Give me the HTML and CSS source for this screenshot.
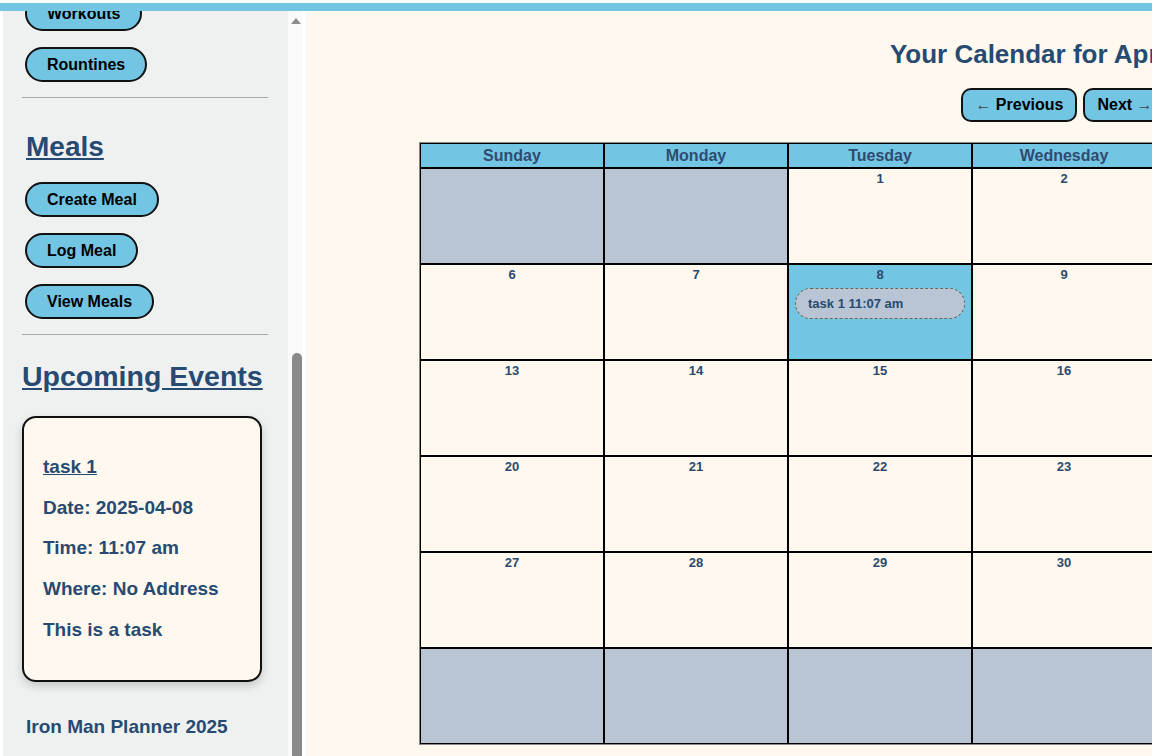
FILE: index.html
```html
<!DOCTYPE html>
<html lang="en">
<head>
    <meta charset="UTF-8">
    <meta name="viewport" content="width=device-width, initial-scale=1.0">
    <title>Iron Man Planner</title>
    <link rel="stylesheet" href="styles.css">
</head>
<body>
    <div class="topbar"></div>
    <div class="layout">
        <aside class="sidebar">
            <div class="side-scroll" id="side-scroll">
                <h2 class="side-title">Calendar</h2>
                <div class="side-links">
                    <button class="pill">Add Event</button>
                    <button class="pill">View Events</button>
                    <button class="pill">Settings</button>
                </div>
                <hr class="divider">
                <h2 class="side-title">Fitness</h2>
                <div class="side-links">
                    <button class="pill">Log Workout</button>
                    <button class="pill">Workouts</button>
                    <button class="pill">Rountines</button>
                </div>
                <hr class="divider">
                <h2 class="side-title">Meals</h2>
                <div class="side-links">
                    <button class="pill">Create Meal</button>
                    <button class="pill">Log Meal</button>
                    <button class="pill">View Meals</button>
                </div>
                <hr class="divider">
                <h2 class="events-title">Upcoming Events</h2>
                <div class="event-card">
                    <p><a href="javascript:void(0)">task 1</a></p>
                    <p>Date: 2025-04-08</p>
                    <p>Time: 11:07 am</p>
                    <p>Where: No Address</p>
                    <p>This is a task</p>
                </div>
                <p class="side-footer">Iron Man Planner 2025</p>
            </div>
            <div class="scrollbar">
                <span class="scroll-up"></span>
                <span class="scroll-thumb"></span>
            </div>
        </aside>
        <main class="main">
            <div class="main-inner">
                <h2 class="cal-title">Your Calendar for April 2025</h2>
                <div class="cal-nav">
                    <button class="nav-btn"><span class="arrow">&larr;</span> Previous</button>
                    <button class="nav-btn">Next <span class="arrow">&rarr;</span></button>
                </div>
                <table class="calendar">
                    <tr>
                        <th>Sunday</th><th>Monday</th><th>Tuesday</th><th>Wednesday</th><th>Thursday</th><th>Friday</th><th>Saturday</th>
                    </tr>
                    <tr>
                        <td class="empty"></td><td class="empty"></td><td>1</td><td>2</td><td>3</td><td>4</td><td>5</td>
                    </tr>
                    <tr>
                        <td>6</td><td>7</td>
                        <td class="today">8<span class="event">task 1 11:07 am</span></td>
                        <td>9</td><td>10</td><td>11</td><td>12</td>
                    </tr>
                    <tr>
                        <td>13</td><td>14</td><td>15</td><td>16</td><td>17</td><td>18</td><td>19</td>
                    </tr>
                    <tr>
                        <td>20</td><td>21</td><td>22</td><td>23</td><td>24</td><td>25</td><td>26</td>
                    </tr>
                    <tr>
                        <td>27</td><td>28</td><td>29</td><td>30</td><td class="empty"></td><td class="empty"></td><td class="empty"></td>
                    </tr>
                    <tr>
                        <td class="empty"></td><td class="empty"></td><td class="empty"></td><td class="empty"></td><td class="empty"></td><td class="empty"></td><td class="empty"></td>
                    </tr>
                </table>
            </div>
        </main>
    </div>
    <script>
        const sideScroll = document.getElementById('side-scroll');
        sideScroll.scrollTop = sideScroll.scrollHeight;
    </script>
</body>
</html>
```

FILE: styles.css
```css
html, body {
    margin: 0;
    height: 100%;
    overflow: hidden;
}
body {
    font-family: 'Liberation Sans', Arial, sans-serif;
    background: #fff;
    padding-top: 3px;
    box-sizing: border-box;
}
.topbar {
    height: 8px;
    background-color: #72c6e4;
}
.layout {
    display: flex;
    gap: 3px;
    padding-left: 3px;
    height: 100vh;
}
.sidebar {
    flex: 0 0 300px;
    display: flex;
    height: 100vh;
}
.side-scroll {
    flex: 1;
    overflow: hidden;
    background-color: #eff1f1;
    padding: 0 20px 29px 19px;
    box-sizing: border-box;
}
.scrollbar {
    flex: 0 0 15px;
    display: flex;
    flex-direction: column;
    align-items: center;
    background-color: #fafafa;
}
.scroll-up {
    margin-top: 7px;
    border-left: 5px solid transparent;
    border-right: 5px solid transparent;
    border-bottom: 6px solid #8c8c8c;
}
.scroll-thumb {
    flex: 1;
    width: 10px;
    margin-top: 329px;
    margin-left: 2px;
    background-color: #8a8a8a;
    border-radius: 5px 5px 0 0;
}
.side-title {
    font-size: 28px;
    color: #274a72;
    text-decoration: underline;
    margin: 33px 0 19px 4px;
}
.events-title {
    font-size: 28.5px;
    color: #274a72;
    text-decoration: underline;
    margin: 25px 0 23px 0;
}
.side-links {
    display: flex;
    flex-direction: column;
    align-items: flex-start;
    gap: 16px;
    margin-bottom: 15px;
}
.pill {
    margin-left: 3px;
    padding: 6px 20px;
    border: 2px solid #111;
    border-radius: 20px;
    background-color: #72c6e4;
    color: #000;
    font-family: inherit;
    font-size: 16px;
    font-weight: bold;
    line-height: 19px;
    cursor: pointer;
}
.divider {
    border: none;
    border-top: 1px solid #aaa;
    margin: 0;
}
.event-card {
    width: 240px;
    box-sizing: border-box;
    padding: 29px 19px 29px;
    border: 2px solid #111;
    border-radius: 14px;
    background-color: #fff8ef;
    box-shadow: 0 4px 10px rgba(0, 0, 0, 0.18);
}
.event-card p {
    margin: 0;
    line-height: 40.7px;
    font-size: 19px;
    font-weight: bold;
    color: #274a72;
}
.event-card a {
    color: #274a72;
    text-decoration: underline;
}
.side-footer {
    margin: 34px 0 0 4px;
    font-size: 19px;
    font-weight: bold;
    color: #274a72;
}
.main {
    flex: 1;
    overflow: hidden;
    background-color: #fff8ef;
}
.main-inner {
    width: 1516px;
    text-align: center;
}
.cal-title {
    font-size: 26px;
    line-height: 30px;
    color: #274a72;
    margin: 28px 0 19px;
}
.cal-nav {
    display: flex;
    justify-content: center;
    gap: 6px;
}
.nav-btn {
    padding: 6px 12px;
    border: 2px solid #111;
    border-radius: 10px;
    background-color: #72c6e4;
    color: #000;
    font-family: inherit;
    font-size: 16px;
    font-weight: bold;
    line-height: 18px;
    cursor: pointer;
}
.arrow {
    font-size: 16px;
    font-weight: normal;
    color: #444;
}
.calendar {
    margin: 20px auto 0;
    border: 1px solid #888;
    border-spacing: 0;
    table-layout: fixed;
}
.calendar th {
    width: 178px;
    padding: 2px;
    line-height: 19px;
    border: 1px solid #000;
    background-color: #72c6e4;
    color: #2f4b72;
    font-size: 16px;
}
.calendar td {
    height: 90px;
    padding: 2px;
    border: 1px solid #000;
    vertical-align: top;
    text-align: center;
    font-size: 13px;
    font-weight: bold;
    color: #274a72;
    background-color: #fff8ef;
}
.calendar td.empty {
    background-color: #b9c5d5;
}
.calendar td.today {
    background-color: #72c6e4;
}
.event {
    display: block;
    margin: 6px 4px 0;
    padding: 7px 12px;
    border: 1px dashed #5b6b5b;
    border-radius: 16px;
    background-color: #b9c5d5;
    text-align: left;
}
```
